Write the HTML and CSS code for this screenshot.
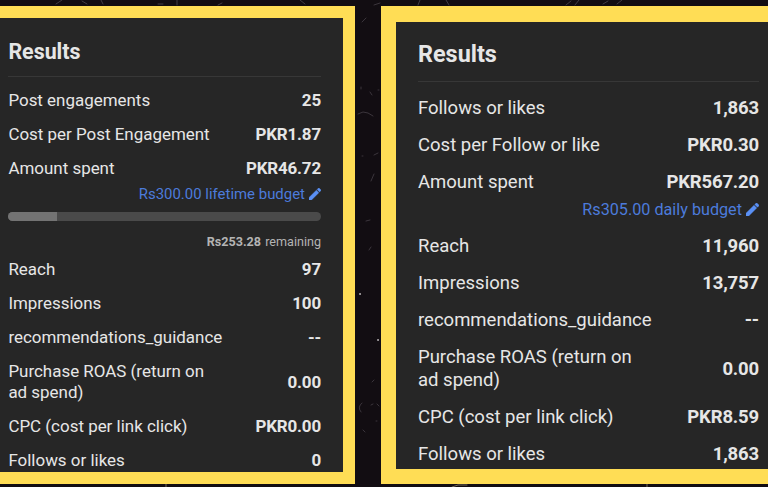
FILE: index.html
```html
<!DOCTYPE html>
<html lang="en">
<head>
    <meta charset="UTF-8">
    <meta name="viewport" content="width=device-width, initial-scale=1.0">
    <title>Ad Results</title>
    <link rel="stylesheet" href="styles.css">
</head>
<body>
    <svg class="marble" viewBox="0 0 768 487" fill="none" stroke="#77717a" stroke-width="0.8" stroke-linecap="round" aria-hidden="true">
        <path d="M56 4l6-4M82 1l5 3M101 0l2 4M158 4h5M177 0v5M218 5l4-2M300 0l5 4M418 5l2-5M446 0l3 5M566 5l5-4M575 5l4-5M603 4l5-3M617 4l5-4" opacity=".6"/>
        <path d="M358 114l5-2 5 1 5 3M362 22l4-4M374 5l6-2M370 92l2 3M378 90h1M361 87v2M362 156h1M374 155l4-2M371 181l3-7M366 221l4-1M371 247l-2 3M374 380l-2 2M362 403q-5 4-1 9M371 405l2-1M377 404l2 2M376 421h1M363 430l2 2" opacity=".5"/>
        <path d="M360 294h.1M378 340h.1" stroke="#aaa6a8" stroke-width="2"/>
        <path d="M166 483v4M452 487l6-2 9 0M647 484v3" stroke="#8b8069"/>
    </svg>
    <div class="page">
        <div class="panel panel-left">
            <h2>Results</h2>
            <div class="row"><span>Post engagements</span><b>25</b></div>
            <div class="row"><span>Cost per Post Engagement</span><b>PKR1.87</b></div>
            <div class="row"><span>Amount spent</span><b>PKR46.72</b></div>
            <div class="budget">
                <span>Rs300.00 lifetime budget</span>
                <svg class="pencil" viewBox="3 3 18 18"><path d="M3 17.25V21h3.75L17.81 9.94l-3.75-3.75L3 17.25zM20.71 7.04a1 1 0 0 0 0-1.41l-2.34-2.34a1 1 0 0 0-1.41 0l-1.83 1.83 3.75 3.75 1.83-1.83z"/></svg>
            </div>
            <div class="progress"><div class="progress-fill" style="width: 15.6%"></div></div>
            <div class="remaining"><b>Rs253.28</b> remaining</div>
            <div class="row"><span>Reach</span><b>97</b></div>
            <div class="row"><span>Impressions</span><b>100</b></div>
            <div class="row"><span>recommendations_guidance</span><b>--</b></div>
            <div class="row row-tall"><span>Purchase ROAS (return on<br>ad spend)</span><b>0.00</b></div>
            <div class="row"><span>CPC (cost per link click)</span><b>PKR0.00</b></div>
            <div class="row"><span>Follows or likes</span><b>0</b></div>
        </div>
        <div class="panel panel-right">
            <h2>Results</h2>
            <div class="row"><span>Follows or likes</span><b>1,863</b></div>
            <div class="row"><span>Cost per Follow or like</span><b>PKR0.30</b></div>
            <div class="row"><span>Amount spent</span><b>PKR567.20</b></div>
            <div class="budget">
                <span>Rs305.00 daily budget</span>
                <svg class="pencil" viewBox="3 3 18 18"><path d="M3 17.25V21h3.75L17.81 9.94l-3.75-3.75L3 17.25zM20.71 7.04a1 1 0 0 0 0-1.41l-2.34-2.34a1 1 0 0 0-1.41 0l-1.83 1.83 3.75 3.75 1.83-1.83z"/></svg>
            </div>
            <div class="row"><span>Reach</span><b>11,960</b></div>
            <div class="row"><span>Impressions</span><b>13,757</b></div>
            <div class="row"><span>recommendations_guidance</span><b>--</b></div>
            <div class="row row-tall"><span>Purchase ROAS (return on<br>ad spend)</span><b>0.00</b></div>
            <div class="row"><span>CPC (cost per link click)</span><b>PKR8.59</b></div>
            <div class="row"><span>Follows or likes</span><b>1,863</b></div>
        </div>
    </div>
</body>
</html>
```
FILE: styles.css
```css
* {
    box-sizing: border-box;
}

body {
    margin: 0;
    height: 487px;
    overflow: hidden;
    background-color: #120d12;
    color: #e6e6e6;
    font-family: Roboto, sans-serif;
}

/* veins of the marble backdrop */
.marble {
    position: absolute;
    top: 0;
    left: 0;
    width: 768px;
    height: 487px;
}

.page {
    position: relative;
    display: flex;
    gap: 26px;
    padding-top: 6px;
}

.panel {
    flex-shrink: 0;
    height: 478px;
    overflow: hidden;
    background-color: #262626;
    border: 0 solid #ffdd55;
}

.panel-left {
    width: 355px;
    border-width: 12px 12px 12px 0;
    padding: 0 22px 0 8.4px;
    font-size: 16.95px;
    line-height: 22px;
}

.panel-right {
    width: 387px;
    border-width: 16px 0 15px 15px;
    padding: 0 9px 0 22px;
    font-size: 18.5px;
    line-height: 23px;
}

.panel h2 {
    margin: 0;
    border-bottom: 1px solid #373737;
    font-weight: 700;
}

.panel-left h2 {
    height: 59px;
    margin-bottom: 6px;
    padding-top: 23px;
    font-size: 21.4px;
}

.panel-right h2 {
    height: 60px;
    margin-bottom: 8px;
    padding-top: 21px;
    font-size: 23.4px;
}

.row {
    display: flex;
    justify-content: space-between;
    align-items: center;
    height: 34px;
}

.row-tall {
    height: 55px;
    padding-top: 1px;
    line-height: 21px;
}

.panel-right .row {
    height: 37px;
}

.panel-right .row-tall {
    height: 60px;
    padding-top: 0;
    line-height: 23px;
}

.row b {
    font-weight: 700;
    letter-spacing: -0.15px;
}

.budget {
    display: flex;
    justify-content: flex-end;
    align-items: center;
    gap: 4px;
    height: 18px;
    color: #4c7bdb;
    font-size: 14.95px;
}

.panel-right .budget {
    height: 17px;
    margin-bottom: 10px;
    font-size: 16.2px;
}

.pencil {
    width: 12px;
    height: 12px;
    fill: #5a90f5;
    stroke: #5a90f5;
    stroke-width: 0.6;
}

.panel-right .pencil {
    width: 13px;
    height: 13px;
}

.progress {
    height: 9px;
    margin-top: 9px;
    border-radius: 5px;
    background-color: #4a4a4a;
    overflow: hidden;
}

.progress-fill {
    height: 100%;
    background-color: #737373;
}

.remaining {
    height: 31px;
    padding-top: 10px;
    color: #b4b4b4;
    font-size: 12.6px;
    text-align: right;
    word-spacing: 1px;
}
```
